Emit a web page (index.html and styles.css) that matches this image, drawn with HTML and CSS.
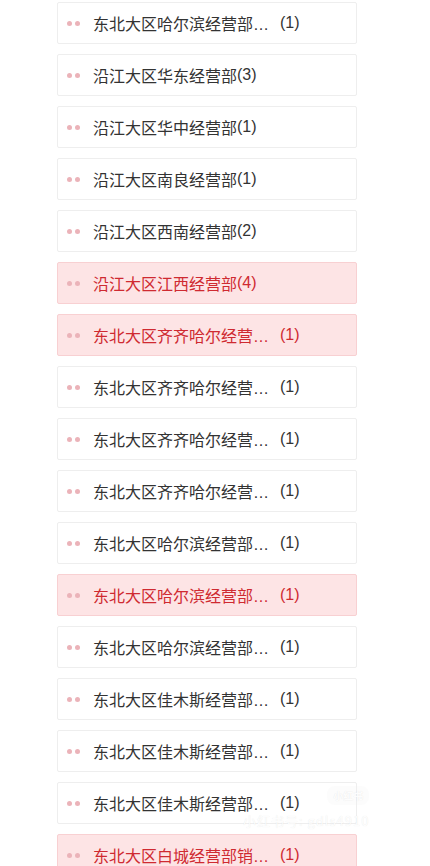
FILE: index.html
```html
<!DOCTYPE html>
<html lang="zh-CN">
<head>
    <meta charset="UTF-8">
    <meta name="viewport" content="width=device-width, initial-scale=1.0">
    <title>经营部列表</title>
    <link rel="stylesheet" href="styles.css">
</head>
<body>

    <ul class="dept-list">
        <li class="dept-item"><span class="dots"><i></i><i></i></span><span class="dept-name">东北大区哈尔滨经营部销售部</span><span class="dept-count">(1)</span></li>
        <li class="dept-item"><span class="dots"><i></i><i></i></span><span class="dept-name">沿江大区华东经营部</span><span class="dept-count">(3)</span></li>
        <li class="dept-item"><span class="dots"><i></i><i></i></span><span class="dept-name">沿江大区华中经营部</span><span class="dept-count">(1)</span></li>
        <li class="dept-item"><span class="dots"><i></i><i></i></span><span class="dept-name">沿江大区南良经营部</span><span class="dept-count">(1)</span></li>
        <li class="dept-item"><span class="dots"><i></i><i></i></span><span class="dept-name">沿江大区西南经营部</span><span class="dept-count">(2)</span></li>
        <li class="dept-item active"><span class="dots"><i></i><i></i></span><span class="dept-name">沿江大区江西经营部</span><span class="dept-count">(4)</span></li>
        <li class="dept-item active"><span class="dots"><i></i><i></i></span><span class="dept-name">东北大区齐齐哈尔经营部销售部</span><span class="dept-count">(1)</span></li>
        <li class="dept-item"><span class="dots"><i></i><i></i></span><span class="dept-name">东北大区齐齐哈尔经营部销售部</span><span class="dept-count">(1)</span></li>
        <li class="dept-item"><span class="dots"><i></i><i></i></span><span class="dept-name">东北大区齐齐哈尔经营部销售部</span><span class="dept-count">(1)</span></li>
        <li class="dept-item"><span class="dots"><i></i><i></i></span><span class="dept-name">东北大区齐齐哈尔经营部销售部</span><span class="dept-count">(1)</span></li>
        <li class="dept-item"><span class="dots"><i></i><i></i></span><span class="dept-name">东北大区哈尔滨经营部销售部</span><span class="dept-count">(1)</span></li>
        <li class="dept-item active"><span class="dots"><i></i><i></i></span><span class="dept-name">东北大区哈尔滨经营部销售部</span><span class="dept-count">(1)</span></li>
        <li class="dept-item"><span class="dots"><i></i><i></i></span><span class="dept-name">东北大区哈尔滨经营部销售部</span><span class="dept-count">(1)</span></li>
        <li class="dept-item"><span class="dots"><i></i><i></i></span><span class="dept-name">东北大区佳木斯经营部销售部</span><span class="dept-count">(1)</span></li>
        <li class="dept-item"><span class="dots"><i></i><i></i></span><span class="dept-name">东北大区佳木斯经营部销售部</span><span class="dept-count">(1)</span></li>
        <li class="dept-item"><span class="dots"><i></i><i></i></span><span class="dept-name">东北大区佳木斯经营部销售部</span><span class="dept-count">(1)</span></li>
        <li class="dept-item active"><span class="dots"><i></i><i></i></span><span class="dept-name">东北大区白城经营部销售部</span><span class="dept-count">(1)</span></li>
    </ul>

    <!-- watermark -->
    <div class="watermark">
        <span class="wm-badge">小红书</span>
        <span class="wm-id">小红书号: gdls4910</span>
    </div>

</body>
</html>
```

FILE: styles.css
```css
html, body {
    margin: 0;
    height: 100%;
    overflow: hidden;
}

body {
    font-family: "Liberation Sans", "Noto Sans CJK SC", sans-serif;
    background-color: #fff;
    color: #333;
    position: relative;
}

.dept-list {
    list-style: none;
    margin: 0;
    padding: 2px 0 0 57px;
}

.dept-item {
    width: 300px;
    height: 42px;
    box-sizing: border-box;
    margin-bottom: 10px;
    border: 1px solid #eeeeee;
    border-radius: 2px;
    display: flex;
    align-items: center;
    padding-left: 9px;
    font-size: 16px;
}

.dept-item.active {
    background-color: #fde4e5; /* light pink for selected rows */
    border-color: #f8d0d2;
    color: #cf2a31;
}

.dots {
    display: flex;
    gap: 3px;
    margin-right: 13px;
}

.dots i {
    display: block;
    width: 5px;
    height: 5px;
    border-radius: 50%;
    background-color: #ebb3b9;
}

.dept-name {
    max-width: 187px;
    white-space: nowrap;
    overflow: hidden;
    text-overflow: ellipsis;
}

.dept-count {
    white-space: nowrap;
}

.watermark {
    position: absolute;
    left: 243px;
    top: 786px;
    display: flex;
    flex-direction: column;
    align-items: flex-end;
    gap: 6px;
    color: rgba(255, 255, 255, 0.95);
    text-shadow: 0 0 1px rgba(0, 0, 0, 0.1);
    font-family: "Noto Sans CJK SC", sans-serif;
}

.wm-badge {
    font-size: 10px;
    font-weight: bold;
    padding: 2px 6px;
    border-radius: 8px;
    background-color: rgba(240, 240, 240, 0.2);
}

.wm-id {
    font-size: 13px;
    letter-spacing: 1px;
}
```
